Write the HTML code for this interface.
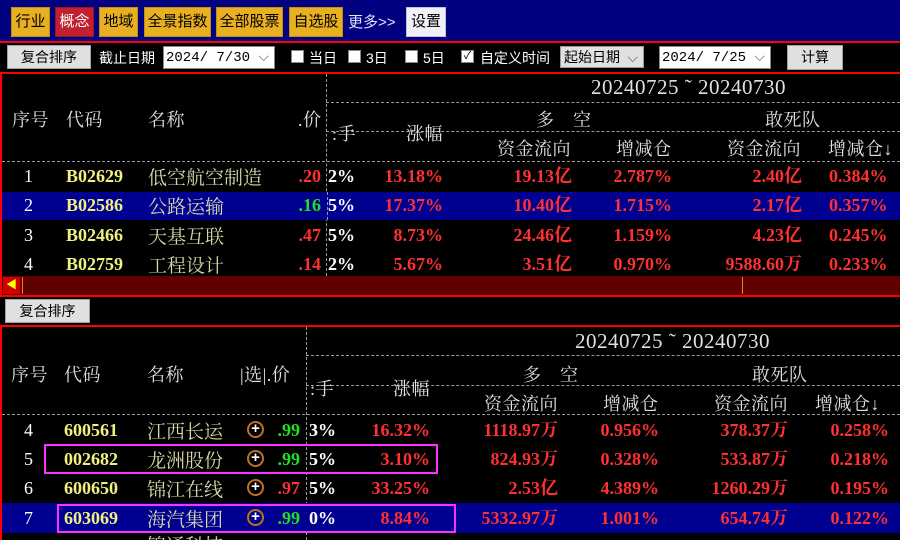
<!DOCTYPE html>
<html><head><meta charset="utf-8"><style>
*{margin:0;padding:0;box-sizing:border-box}
html,body{width:900px;height:540px;overflow:hidden}
body{background:#000;position:relative;font-family:"Liberation Sans","Noto Sans CJK SC",sans-serif}
.a{position:absolute;white-space:nowrap}
.btn{position:absolute;background:#e8b020;color:#000;font-size:15px;text-align:center;line-height:28px;border:1px solid #c09010}
.gb{position:absolute;background:#e0e0e0;border:1px solid #a0a0a0;color:#000;font-size:14px;text-align:center}
.wt{color:#fff;font-size:14px}
.inp{position:absolute;background:#fff;border:1px solid #888;color:#000;font-family:"Liberation Mono",monospace;font-size:14px;line-height:22px;padding-left:2px}
.cb{position:absolute;width:13px;height:13px;background:#fff;border:1px solid #888}
.h{position:absolute;color:#e0e0e0;font-family:"Liberation Serif","Noto Serif CJK SC",serif;font-size:18px;letter-spacing:0.5px;white-space:nowrap}
.dt{font-size:21px;letter-spacing:0.5px}
.d{position:absolute;font-family:"Liberation Serif","Noto Serif CJK SC",serif;font-weight:bold;font-size:18px;white-space:nowrap;line-height:20px}
.r{color:#ff3030}.g{color:#20e020}.w{color:#fff}.y{color:#f0f080}
.n{position:absolute;font-family:"Liberation Serif","Noto Serif CJK SC",serif;font-size:19px;color:#d8d8a8;white-space:nowrap;line-height:20px;margin-top:4px}
.dh{position:absolute;height:0;border-top:1px dashed #999}
.dv{position:absolute;width:0;border-left:1px dashed #999}
.pl{position:absolute;width:17px;height:17px;border-radius:50%;border:2px solid #c07020;color:#fff;font-size:15px;line-height:12px;text-align:center;font-weight:bold}
</style></head><body>
<div class="a" style="left:0;top:0;width:900px;height:41px;background:#000080"></div>
<div class="btn" style="left:11px;top:7px;width:39px">行业</div>
<div class="btn" style="left:55px;top:7px;width:39px;background:#c02030;color:#fff;border-color:#a01020">概念</div>
<div class="btn" style="left:99px;top:7px;width:39px">地域</div>
<div class="btn" style="left:144px;top:7px;width:67px">全景指数</div>
<div class="btn" style="left:216px;top:7px;width:67px">全部股票</div>
<div class="btn" style="left:289px;top:7px;width:54px">自选股</div>
<div class="a" style="left:348px;top:11px;color:#e0e0ff;font-size:15px">更多&gt;&gt;</div>
<div class="btn" style="left:406px;top:7px;width:40px;background:#f0f0f8;border-color:#c0c0d0">设置</div>
<div class="a" style="left:0;top:41px;width:900px;height:2px;background:#ff0000"></div>
<div class="gb" style="left:7px;top:45px;width:84px;height:24px;line-height:22px">复合排序</div>
<div class="a wt" style="left:99px;top:48px">截止日期</div>
<div class="inp" style="left:163px;top:46px;width:112px;height:23px">2024/ 7/30<span style="position:absolute;right:5px;color:#666">⌵</span></div>
<div class="cb" style="left:291px;top:50px"></div><div class="a wt" style="left:309px;top:48px">当日</div>
<div class="cb" style="left:348px;top:50px"></div><div class="a wt" style="left:366px;top:48px">3日</div>
<div class="cb" style="left:405px;top:50px"></div><div class="a wt" style="left:423px;top:48px">5日</div>
<div class="cb" style="left:461px;top:50px;font-size:11px;line-height:11px;text-align:center;color:#000">✓</div><div class="a wt" style="left:480px;top:48px">自定义时间</div>
<div class="a" style="left:560px;top:46px;width:84px;height:22px;background:#e0e0e0;border:1px solid #999;font-size:14px;line-height:20px;padding-left:3px">起始日期<span style="position:absolute;right:5px;color:#666">⌵</span></div>
<div class="inp" style="left:659px;top:46px;width:112px;height:23px">2024/ 7/25<span style="position:absolute;right:5px;color:#666">⌵</span></div>
<div class="gb" style="left:787px;top:45px;width:56px;height:25px;line-height:23px">计算</div>
<!-- table 1 -->
<div class="a" style="left:0;top:72px;width:900px;height:225px;border:2px solid #ff0000;border-right:none"></div>
<div class="dv" style="left:326px;top:74px;height:202px"></div>
<div class="dh" style="left:326px;top:102px;width:574px"></div>
<div class="dh" style="left:326px;top:131px;width:574px"></div>
<div class="dh" style="left:2px;top:161px;width:898px"></div>
<div class="h" style="left:12px;top:106px">序号</div>
<div class="h" style="left:66px;top:106px">代码</div>
<div class="h" style="left:148px;top:106px">名称</div>
<div class="h" style="left:298px;top:106px">.价</div>
<div class="h" style="left:332px;top:120px">:手</div>
<div class="h" style="left:406px;top:120px">涨幅</div>
<div class="h dt" style="left:591px;top:75px">20240725 ˜ 20240730</div>
<div class="h" style="left:536px;top:106px">多　空</div>
<div class="h" style="left:765px;top:106px">敢死队</div>
<div class="h" style="left:497px;top:135px">资金流向</div>
<div class="h" style="left:616px;top:135px">增减仓</div>
<div class="h" style="left:727px;top:135px">资金流向</div>
<div class="h" style="left:828px;top:135px">增减仓↓</div>
<div class="a" style="left:2px;top:192px;width:898px;height:28px;background:#000090"></div>
<div class="a" style="left:327px;top:192px;width:0;height:28px;border-left:1px dashed #999"></div>
<div class="d w" style="left:24px;top:166px;font-weight:normal">1</div><div class="d y" style="left:66px;top:166px">B02629</div><div class="n" style="left:148px;top:165px">低空航空制造</div><div class="d r" style="right:579px;top:166px">.20</div><div class="d w" style="left:328px;top:166px">2%</div><div class="d r" style="right:457px;top:166px">13.18%</div><div class="d r" style="right:328px;top:166px">19.13亿</div><div class="d r" style="right:228px;top:166px">2.787%</div><div class="d r" style="right:98px;top:166px">2.40亿</div><div class="d r" style="left:829px;top:166px">0.384%</div>
<div class="d w" style="left:24px;top:195px;font-weight:normal">2</div><div class="d y" style="left:66px;top:195px">B02586</div><div class="n" style="left:148px;top:194px">公路运输</div><div class="d g" style="right:579px;top:195px">.16</div><div class="d w" style="left:328px;top:195px">5%</div><div class="d r" style="right:457px;top:195px">17.37%</div><div class="d r" style="right:328px;top:195px">10.40亿</div><div class="d r" style="right:228px;top:195px">1.715%</div><div class="d r" style="right:98px;top:195px">2.17亿</div><div class="d r" style="left:829px;top:195px">0.357%</div>
<div class="d w" style="left:24px;top:225px;font-weight:normal">3</div><div class="d y" style="left:66px;top:225px">B02466</div><div class="n" style="left:148px;top:224px">天基互联</div><div class="d r" style="right:579px;top:225px">.47</div><div class="d w" style="left:328px;top:225px">5%</div><div class="d r" style="right:457px;top:225px">8.73%</div><div class="d r" style="right:328px;top:225px">24.46亿</div><div class="d r" style="right:228px;top:225px">1.159%</div><div class="d r" style="right:98px;top:225px">4.23亿</div><div class="d r" style="left:829px;top:225px">0.245%</div>
<div class="d w" style="left:24px;top:254px;font-weight:normal">4</div><div class="d y" style="left:66px;top:254px">B02759</div><div class="n" style="left:148px;top:253px">工程设计</div><div class="d r" style="right:579px;top:254px">.14</div><div class="d w" style="left:328px;top:254px">2%</div><div class="d r" style="right:457px;top:254px">5.67%</div><div class="d r" style="right:328px;top:254px">3.51亿</div><div class="d r" style="right:228px;top:254px">0.970%</div><div class="d r" style="right:98px;top:254px">9588.60万</div><div class="d r" style="left:829px;top:254px">0.233%</div>
<div class="a" style="left:2px;top:276px;width:898px;height:19px;background:#600000"></div>
<div class="a" style="left:3px;top:277px;width:17px;height:17px;background:#d00000;color:#ff0;font-size:11px;line-height:17px;text-align:center">◀</div>
<div class="a" style="left:22px;top:277px;width:1px;height:17px;background:#ff8000"></div>
<div class="a" style="left:742px;top:277px;width:1px;height:17px;background:#ff8000"></div>
<!-- section 2 -->
<div class="gb" style="left:5px;top:299px;width:85px;height:24px;line-height:22px">复合排序</div>
<div class="a" style="left:0;top:325px;width:900px;height:215px;border-top:2px solid #ff0000;border-left:2px solid #ff0000"></div>
<div class="dv" style="left:306px;top:327px;height:213px"></div>
<div class="dh" style="left:306px;top:355px;width:594px"></div>
<div class="dh" style="left:306px;top:385px;width:594px"></div>
<div class="dh" style="left:2px;top:414px;width:898px"></div>
<div class="h" style="left:11px;top:361px">序号</div>
<div class="h" style="left:64px;top:361px">代码</div>
<div class="h" style="left:147px;top:361px">名称</div>
<div class="h" style="left:240px;top:361px">|选|.价</div>
<div class="h" style="left:310px;top:375px">:手</div>
<div class="h" style="left:393px;top:375px">涨幅</div>
<div class="h dt" style="left:575px;top:329px">20240725 ˜ 20240730</div>
<div class="h" style="left:523px;top:361px">多　空</div>
<div class="h" style="left:752px;top:361px">敢死队</div>
<div class="h" style="left:484px;top:390px">资金流向</div>
<div class="h" style="left:603px;top:390px">增减仓</div>
<div class="h" style="left:714px;top:390px">资金流向</div>
<div class="h" style="left:815px;top:390px">增减仓↓</div>
<div class="a" style="left:2px;top:503px;width:898px;height:30px;background:#000090"></div>
<div class="d w" style="left:24px;top:420px;font-weight:normal">4</div><div class="d y" style="left:64px;top:420px">600561</div><div class="n" style="left:147px;top:419px">江西长运</div><div class="pl" style="left:247px;top:421px">+</div><div class="d g" style="right:600px;top:420px">.99</div><div class="d w" style="left:309px;top:420px">3%</div><div class="d r" style="right:470px;top:420px">16.32%</div><div class="d r" style="right:342px;top:420px">1118.97万</div><div class="d r" style="right:241px;top:420px">0.956%</div><div class="d r" style="right:112px;top:420px">378.37万</div><div class="d r" style="right:11px;top:420px">0.258%</div>
<div class="d w" style="left:24px;top:449px;font-weight:normal">5</div><div class="d y" style="left:64px;top:449px">002682</div><div class="n" style="left:147px;top:448px">龙洲股份</div><div class="pl" style="left:247px;top:450px">+</div><div class="d g" style="right:600px;top:449px">.99</div><div class="d w" style="left:309px;top:449px">5%</div><div class="d r" style="right:470px;top:449px">3.10%</div><div class="d r" style="right:342px;top:449px">824.93万</div><div class="d r" style="right:241px;top:449px">0.328%</div><div class="d r" style="right:112px;top:449px">533.87万</div><div class="d r" style="right:11px;top:449px">0.218%</div>
<div class="d w" style="left:24px;top:478px;font-weight:normal">6</div><div class="d y" style="left:64px;top:478px">600650</div><div class="n" style="left:147px;top:477px">锦江在线</div><div class="pl" style="left:247px;top:479px">+</div><div class="d r" style="right:600px;top:478px">.97</div><div class="d w" style="left:309px;top:478px">5%</div><div class="d r" style="right:470px;top:478px">33.25%</div><div class="d r" style="right:342px;top:478px">2.53亿</div><div class="d r" style="right:241px;top:478px">4.389%</div><div class="d r" style="right:112px;top:478px">1260.29万</div><div class="d r" style="right:11px;top:478px">0.195%</div>
<div class="d w" style="left:24px;top:508px;font-weight:normal">7</div><div class="d y" style="left:64px;top:508px">603069</div><div class="n" style="left:147px;top:507px">海汽集团</div><div class="pl" style="left:247px;top:509px">+</div><div class="d g" style="right:600px;top:508px">.99</div><div class="d w" style="left:309px;top:508px">0%</div><div class="d r" style="right:470px;top:508px">8.84%</div><div class="d r" style="right:342px;top:508px">5332.97万</div><div class="d r" style="right:241px;top:508px">1.001%</div><div class="d r" style="right:112px;top:508px">654.74万</div><div class="d r" style="right:11px;top:508px">0.122%</div>
<div class="n" style="left:147px;top:533px">锦通科技</div>
<div class="a" style="left:44px;top:444px;width:394px;height:30px;border:2px solid #ff30ff"></div>
<div class="a" style="left:57px;top:504px;width:399px;height:29px;border:2px solid #ff30ff"></div>
</body></html>
